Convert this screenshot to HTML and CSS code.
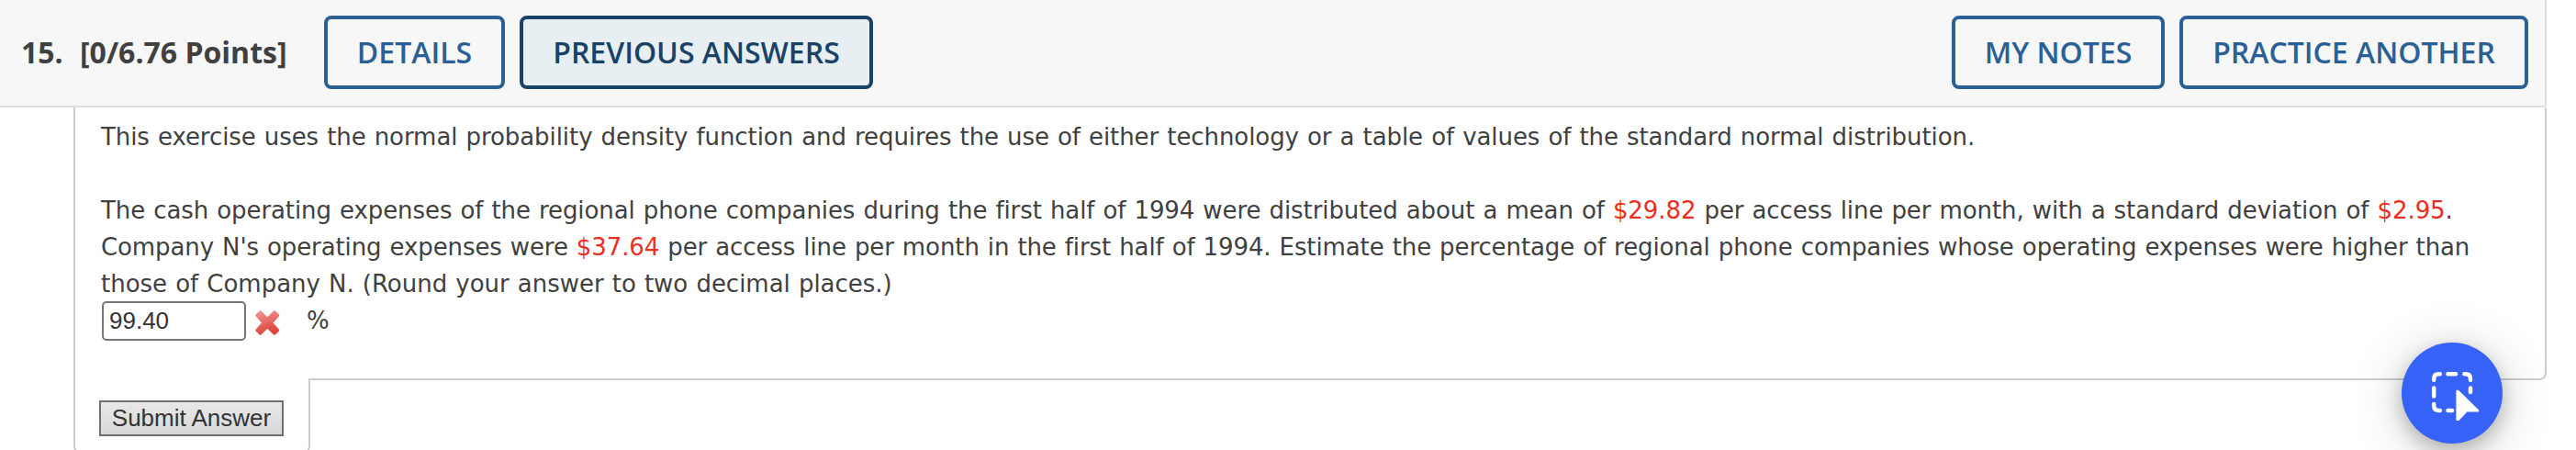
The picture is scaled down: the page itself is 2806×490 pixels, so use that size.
FILE: index.html
```html
<!DOCTYPE html>
<html lang="en">
<head>
    <meta charset="UTF-8">
    <meta name="viewport" content="width=device-width, initial-scale=1.0">
    <title>Question 15</title>
    <link rel="stylesheet" href="styles.css">
</head>
<body>
    <div class="header">
        <span class="number">15.</span>
        <span class="points">[0/6.76 Points]</span>
        <button class="btn details">DETAILS</button>
        <button class="btn previous active">PREVIOUS ANSWERS</button>
        <div class="header-right">
            <button class="btn notes">MY NOTES</button>
            <button class="btn practice">PRACTICE ANOTHER</button>
        </div>
    </div>

    <div class="question">
        <div class="line intro">This exercise uses the normal probability density function and requires the use of either technology or a table of values of the standard normal distribution.</div>
        <div class="line">The cash operating expenses of the regional phone companies during the first half of 1994 were distributed about a mean of <span class="value">$29.82</span> per access line per month, with a standard deviation of <span class="value">$2.95</span>.</div>
        <div class="line company">Company N's operating expenses were <span class="value">$37.64</span> per access line per month in the first half of 1994. Estimate the percentage of regional phone companies whose operating expenses were higher than</div>
        <div class="line rounding">those of Company N. (Round your answer to two decimal places.)</div>
        <div class="answer">
            <input class="answer-box" type="text" value="99.40">
            <svg class="wrong" width="28" height="32" viewBox="0 0 28 32">
                <defs>
                    <linearGradient id="cross" x1="0" y1="0" x2="0.3" y2="1">
                        <stop offset="0" stop-color="#f39690"/>
                        <stop offset="1" stop-color="#de453f"/>
                    </linearGradient>
                </defs>
                <path d="M6.500 3.500 L14.300 11 L22 3.500 L26 7.500 L19 15.500 L26 23.500 L22 27.500 L14.300 20 L6.500 27.500 L2.500 23.500 L9.500 15.500 L2.500 7.500 Z" fill="url(#cross)" stroke="url(#cross)" stroke-width="2.500" stroke-linejoin="round"/>
            </svg>
            <span class="unit">%</span>
        </div>
    </div>

    <div class="submit-tab">
        <button class="submit">Submit Answer</button>
    </div>

    <button class="capture" aria-label="Capture">
        <svg width="54" height="56" viewBox="0 0 54 56">
            <g fill="none" stroke="#fff" stroke-width="4.500" stroke-linecap="round">
                <path d="M4.200 9.800 V8.500 Q4.200 3.300 9.500 3.300 H10.800"/>
                <path d="M19.500 3.300 H28"/>
                <path d="M37.300 3.300 H38.700 Q44 3.300 44 8.500 V9.800"/>
                <path d="M4.200 18.600 V27.400"/>
                <path d="M44 18.600 V23"/>
                <path d="M4.200 36 V37.800 Q4.200 43 9.500 43 H10.800"/>
                <path d="M19.500 43 H24"/>
            </g>
            <path d="M29.400 21.800 H30.500 L52.200 43 V43.400 H40 L31 53 H29.400 Z" fill="#fff" stroke="#fff" stroke-width="2" stroke-linejoin="round"/>
        </svg>
    </button>
</body>
</html>
```
FILE: styles.css
```css
body {
    margin: 0;
    height: 490px;
    overflow: hidden;
    background: #fff;
    color: #404040;
    font-family: Verdana, "DejaVu Sans", sans-serif;
    font-size: 26px;
}

button, input {
    box-sizing: border-box;
    margin: 0;
}

.header {
    box-sizing: border-box;
    display: flex;
    align-items: center;
    width: 2774px;
    height: 117px;
    padding: 0 18px 2px 23px;
    background: #f7f7f7;
    border-right: 2px solid #ddd;
    border-bottom: 2px solid #ddd;
    border-bottom-right-radius: 4px;
    font-family: "Open Sans", sans-serif;
    font-size: 32px;
    font-weight: 700;
    white-space: nowrap;
}

.number {
    width: 64px;
}

.points {
    width: 266px;
}

.btn {
    height: 80px;
    padding: 0;
    background: transparent;
    border: 4px solid #296196;
    border-radius: 8px;
    color: #296196;
    font-family: "Open Sans", sans-serif;
    font-size: 32px;
    font-weight: 600;
}

.details {
    width: 197px;
}

.previous {
    width: 385px;
    margin-left: 16px;
}

.active {
    background: #e7eff2;
    border-color: #194266;
    color: #194266;
}

.header-right {
    display: flex;
    gap: 16px;
    margin-left: auto;
}

.notes {
    width: 232px;
}

.practice {
    width: 380px;
}

.question {
    box-sizing: border-box;
    width: 2694px;
    height: 297px;
    margin-left: 80px;
    padding: 12px 0 0 28px;
    border: 2px solid #ccc;
    border-top: 0;
    border-bottom-right-radius: 8px;
}

.line {
    line-height: 40px;
    letter-spacing: -0.08px;
    word-spacing: 0.9px;
    white-space: nowrap;
}

.intro {
    margin-bottom: 40px;
    letter-spacing: -0.07px;
}

.company {
    letter-spacing: -0.1px;
}

.rounding {
    letter-spacing: -0.02px;
}

.value {
    color: #ee2d20;
}

.answer {
    display: flex;
    align-items: flex-start;
    margin: -1px 0 0 1px;
}

.answer-box {
    width: 157px;
    height: 43px;
    padding: 0 6px;
    border: 2px solid #767676;
    border-radius: 5px;
    color: #333;
    font-family: "Liberation Sans", Arial, sans-serif;
    font-size: 26px;
}

.wrong {
    margin: 8px 0 0 9px;
}

.unit {
    margin: 1px 0 0 29px;
    line-height: 40px;
}

.submit-tab {
    box-sizing: border-box;
    position: relative;
    width: 258px;
    height: 82px;
    margin: -2px 0 0 80px;
    padding: 24px 0 0 26px;
    background: #fff;
    border: 2px solid #ccc;
    border-top: 0;
    border-radius: 0 0 8px 8px;
}

.submit {
    display: block;
    width: 201px;
    height: 39px;
    padding: 0;
    background: linear-gradient(#e8e8e8, #d8d8d8);
    border: 2px solid #707070;
    border-radius: 0;
    color: #333;
    font-family: "Liberation Sans", Arial, sans-serif;
    font-size: 26px;
}

/* floating button over the page */
.capture {
    position: absolute;
    top: 373px;
    left: 2616px;
    display: flex;
    align-items: flex-start;
    width: 110px;
    height: 110px;
    padding: 31px 0 0 31px;
    background: #3662f7;
    border: 0;
    border-radius: 50%;
    box-shadow: 0 8px 60px rgba(0, 0, 0, 0.2), 0 8px 20px rgba(0, 0, 0, 0.22);
}
```
